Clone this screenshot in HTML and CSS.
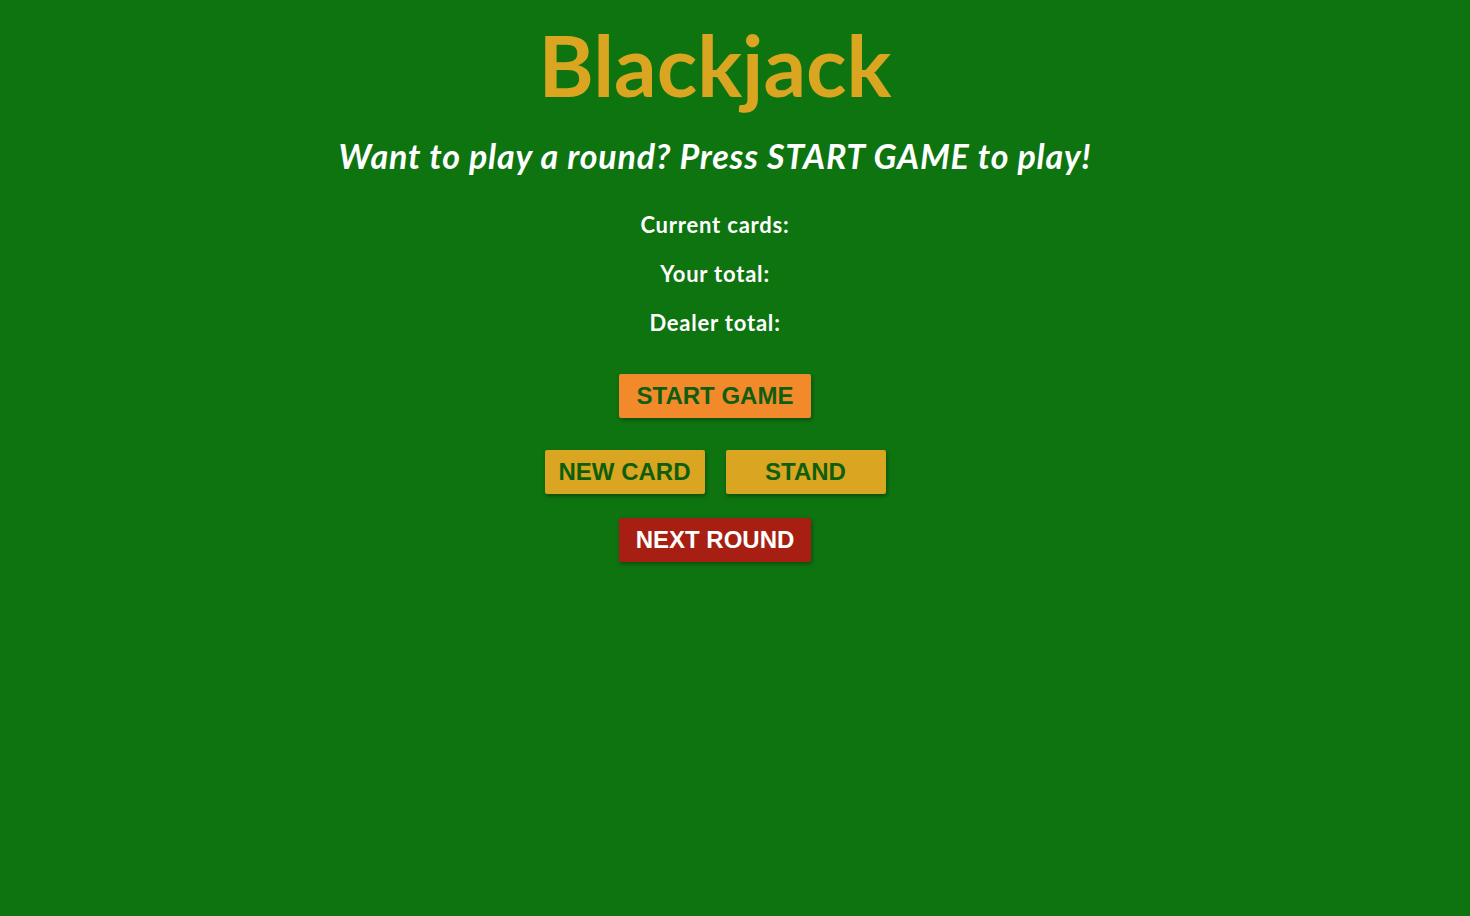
FILE: index.html
```html
<!DOCTYPE html>
<html lang="en">
  <head>
    <meta charset="UTF-8" />
    <meta name="viewport" content="width=device-width, initial-scale=1.0" />
    <title>Blackjack</title>
    <link rel="stylesheet" href="styles.css">
  </head>
  <body>
    <div class="table">
      <h1>Blackjack</h1>
      <p id="message-el">Want to play a round? Press START GAME to play!</p>
      <p id="cards-el">Current cards:</p>
      <p id="sum-el">Your total:</p>
      <p id="dealer-el">Dealer total:</p>

      <div class="button-row start-row">
        <button class="btn btn-start">START GAME</button>
      </div>
      <div class="button-row">
        <button class="btn btn-play">NEW CARD</button>
        <button class="btn btn-play">STAND</button>
      </div>
      <div class="button-row">
        <button class="btn btn-next">NEXT ROUND</button>
      </div>
    </div>
  </body>
</html>
```

FILE: styles.css
```css
body {
  background-color: #0e7410;
  color: white;
  font-family: "Trebuchet MS", "Lato", sans-serif;
  font-weight: bold;
  text-align: center;
  margin: 0;
}
.table {
  width: 1430px;
  padding-top: 14px;
}
h1 {
  color: goldenrod;
  font-size: 84px;
  margin: 0 0 20px 0;
}
p {
  font-size: 22px;
  letter-spacing: 0.8px;
  margin: 0 0 22px 0;
}
#message-el {
  font-size: 34px;
  font-style: italic;
  letter-spacing: 0.8px;
  margin-bottom: 35px;
}
.button-row {
  display: flex;
  justify-content: center;
  gap: 21px;
  margin-bottom: 24px;
}
.start-row {
  margin-top: 38px;
  margin-bottom: 32px;
}
.btn {
  font-family: "Liberation Sans", Arial, sans-serif;
  font-weight: bold;
  font-size: 24px;
  height: 44px;
  width: 192px;
  border: none;
  border-radius: 2px;
  box-shadow: 1px 2px 4px rgba(0, 0, 0, 0.35);
  color: #0d5e0d;
  cursor: pointer;
}
.btn-start {
  background-color: #f28a2c;
}
.btn-play {
  background-color: goldenrod;
  width: 160px;
}
.btn-next {
  background-color: #a61f12;
  color: white;
}
```
